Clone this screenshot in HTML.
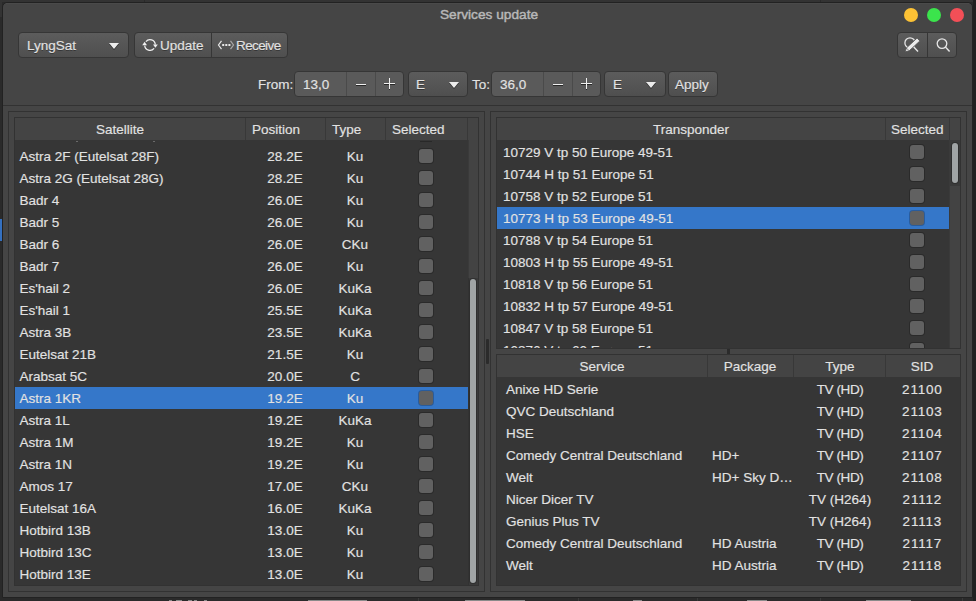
<!DOCTYPE html><html><head><meta charset="utf-8"><style>
html,body{margin:0;padding:0;}
body{width:976px;height:601px;position:relative;overflow:hidden;background:#2a2a2a;font-family:"Liberation Sans",sans-serif;font-size:13.5px;color:#e2e2e2;}
.t{position:absolute;white-space:nowrap;-webkit-text-stroke:0.15px #e2e2e2;}
.chk{position:absolute;box-sizing:border-box;width:14px;height:14px;margin:1px 0 0 1px;border-radius:3px;background:#616161;box-shadow:0 0 0 1px rgba(0,0,0,0.22);}
.btn{position:absolute;box-sizing:border-box;border:1px solid #363636;border-radius:4px;background:linear-gradient(#5c5c5c,#4f4f4f);}

</style></head><body>
<div style="position:absolute;left:0px;top:0px;width:976px;height:2px;background:#333333;"></div>
<div style="position:absolute;left:144px;top:0px;width:1px;height:2px;background:#2a2a2a;"></div>
<div style="position:absolute;left:820px;top:0px;width:1px;height:2px;background:#2a2a2a;"></div>
<div style="position:absolute;left:0px;top:219px;width:2px;height:22px;background:#3470c0;"></div>
<div style="position:absolute;left:973px;top:0px;width:3px;height:601px;background:#202020;"></div>
<div style="position:absolute;left:0px;top:0px;width:2px;height:17px;background:#333333;"></div>
<div style="position:absolute;left:169px;top:600px;width:3px;height:1px;background:#8a8a8a;"></div>
<div style="position:absolute;left:176px;top:600px;width:6px;height:1px;background:#8a8a8a;"></div>
<div style="position:absolute;left:188px;top:600px;width:4px;height:1px;background:#8a8a8a;"></div>
<div style="position:absolute;left:194px;top:600px;width:3px;height:1px;background:#8a8a8a;"></div>
<div style="position:absolute;left:204px;top:600px;width:3px;height:1px;background:#8a8a8a;"></div>
<div style="position:absolute;left:308px;top:600px;width:59px;height:1px;background:#8a8a8a;"></div>
<div style="position:absolute;left:465px;top:600px;width:60px;height:1px;background:#8a8a8a;"></div>
<div style="position:absolute;left:633px;top:600px;width:9px;height:1px;background:#8a8a8a;"></div>
<div style="position:absolute;left:747px;top:600px;width:20px;height:1px;background:#8a8a8a;"></div>
<div style="position:absolute;left:866px;top:600px;width:45px;height:1px;background:#8a8a8a;"></div>
<div style="position:absolute;left:418px;top:598px;width:1px;height:3px;background:#3a3a3a;"></div>
<div style="position:absolute;left:578px;top:598px;width:1px;height:3px;background:#3a3a3a;"></div>
<div style="position:absolute;left:697px;top:598px;width:1px;height:3px;background:#3a3a3a;"></div>
<div style="position:absolute;left:820px;top:598px;width:1px;height:3px;background:#3a3a3a;"></div>
<div style="position:absolute;left:962px;top:598px;width:1px;height:3px;background:#3a3a3a;"></div>
<div style="position:absolute;left:2px;top:2px;width:971px;height:596px;box-sizing:border-box;border:1px solid #222222;border-radius:5px 5px 0 0;background:#454545;"></div>
<div style="position:absolute;left:6px;top:3px;width:963px;height:1px;background:#4a4a4a;"></div>
<div class="t" style="left:339px;width:300px;text-align:center;top:3px;line-height:24px;color:#b8b8b8;font-size:13.7px;-webkit-text-stroke:0.45px #b8b8b8;">Services update</div>
<div style="position:absolute;left:904px;top:8px;width:14px;height:14px;border-radius:50%;background:#fcc235;"></div>
<div style="position:absolute;left:927px;top:8px;width:14px;height:14px;border-radius:50%;background:#3be44c;"></div>
<div style="position:absolute;left:950px;top:8px;width:14px;height:14px;border-radius:50%;background:#f34f57;"></div>
<div class="btn" style="left:18px;top:32px;width:111px;height:26px;"></div>
<div class="t" style="left:27px;top:33px;line-height:26px;text-shadow:0 1px 0 rgba(0,0,0,0.35);">LyngSat</div>
<div style="position:absolute;left:109px;top:43px;width:0;height:0;border-left:5px solid transparent;border-right:5px solid transparent;border-top:6px solid #ececec;filter:drop-shadow(0 1px 0 rgba(0,0,0,0.5));"></div>
<div class="btn" style="left:134px;top:32px;width:154px;height:26px;"></div>
<div style="position:absolute;left:211px;top:33px;width:1px;height:24px;background:#363636;"></div>
<svg style="position:absolute;left:141px;top:37px" width="18" height="16" viewBox="0 0 18 16">
<path d="M4.9 4.6 A5.3 5.3 0 0 1 14.3 7.6" fill="none" stroke="#f0f0f0" stroke-width="1.25"/>
<path d="M13.1 11.4 A5.3 5.3 0 0 1 3.7 8.6" fill="none" stroke="#f0f0f0" stroke-width="1.25"/>
<path d="M1.2 8.2 L3.6 4.8 L6.0 8.2 Z" fill="#f0f0f0"/>
<path d="M12.0 7.4 L16.8 7.4 L14.4 10.8 Z" fill="#f0f0f0"/>
</svg>
<div class="t" style="left:160px;top:33px;line-height:26px;text-shadow:0 1px 0 rgba(0,0,0,0.35);">Update</div>
<svg style="position:absolute;left:216px;top:38px" width="20" height="14" viewBox="0 0 20 14">
<path d="M5.5 2.8 L2.5 7 L5.5 11.2" fill="none" stroke="#e8e8e8" stroke-width="1.2"/>
<rect x="6.2" y="6" width="2" height="2" fill="#e8e8e8"/>
<rect x="9.3" y="6" width="2" height="2" fill="#e8e8e8"/>
<rect x="12.4" y="6" width="2" height="2" fill="#e8e8e8"/>
<path d="M14.5 2.8 L17.5 7 L14.5 11.2" fill="none" stroke="#a8a8a8" stroke-width="1.2"/>
</svg>
<div class="t" style="left:236px;top:33px;line-height:26px;letter-spacing:-0.6px;text-shadow:0 1px 0 rgba(0,0,0,0.35);">Receive</div>
<div class="btn" style="left:897px;top:32px;width:60px;height:26px;"></div>
<div style="position:absolute;left:927px;top:33px;width:1px;height:24px;background:#363636;"></div>
<svg style="position:absolute;left:902px;top:36px" width="20" height="18" viewBox="0 0 20 18">
<circle cx="8" cy="6.9" r="5.1" fill="none" stroke="#e8e8e8" stroke-width="1.25"/>
<path d="M11.3 10.6 L16 15.4" stroke="#e8e8e8" stroke-width="1.4"/>
<path d="M3.2 15.8 L4.44 11.93 L15.14 2.03 L17.86 4.97 L7.16 14.87 Z" fill="#ececec" stroke="#575757" stroke-width="0.9" stroke-linejoin="round"/>
<path d="M4.6 12.2 L6.9 14.6" stroke="#575757" stroke-width="0.7"/>
</svg>
<svg style="position:absolute;left:932.5px;top:36px" width="20" height="18" viewBox="0 0 20 18">
<circle cx="9" cy="7.6" r="4.8" fill="none" stroke="#e6e6e6" stroke-width="1.3"/>
<path d="M12.4 11 L16.6 15.4" stroke="#e6e6e6" stroke-width="1.4"/>
</svg>
<div class="t" style="left:258px;top:72px;line-height:26px;">From:</div>
<div style="position:absolute;box-sizing:border-box;left:294px;top:71px;width:110px;height:26px;border:1px solid #363636;border-radius:4px;background:#5a5a5a;"></div>
<div style="position:absolute;left:346px;top:72px;width:1px;height:24px;background:#4a4a4a;"></div>
<div style="position:absolute;left:375px;top:72px;width:1px;height:24px;background:#4a4a4a;"></div>
<div class="t" style="left:303px;top:72px;line-height:26px;">13,0</div>
<div style="position:absolute;left:356px;top:84px;width:10px;height:1px;background:#f0f0f0;"></div>
<div style="position:absolute;left:356px;top:85px;width:10px;height:1px;background:#1a1a1a;opacity:0.8;"></div>
<div style="position:absolute;left:384px;top:83px;width:11px;height:1px;background:#f0f0f0;"></div>
<div style="position:absolute;left:384px;top:84px;width:5px;height:1px;background:#1a1a1a;opacity:0.8;"></div>
<div style="position:absolute;left:390px;top:84px;width:5px;height:1px;background:#1a1a1a;opacity:0.8;"></div>
<div style="position:absolute;left:389px;top:78px;width:1px;height:11px;background:#f0f0f0;"></div>
<div style="position:absolute;left:389px;top:89px;width:1px;height:1px;background:#1a1a1a;opacity:0.8;"></div>
<div class="btn" style="left:408px;top:71px;width:60px;height:26px;"></div>
<div class="t" style="left:416px;top:72px;line-height:26px;text-shadow:0 1px 0 rgba(0,0,0,0.35);">E</div>
<div style="position:absolute;left:449px;top:82px;width:0;height:0;border-left:5px solid transparent;border-right:5px solid transparent;border-top:6px solid #ececec;filter:drop-shadow(0 1px 0 rgba(0,0,0,0.5));"></div>
<div class="t" style="left:472px;top:72px;line-height:26px;">To:</div>
<div style="position:absolute;box-sizing:border-box;left:491px;top:71px;width:110px;height:26px;border:1px solid #363636;border-radius:4px;background:#5a5a5a;"></div>
<div style="position:absolute;left:543px;top:72px;width:1px;height:24px;background:#4a4a4a;"></div>
<div style="position:absolute;left:572px;top:72px;width:1px;height:24px;background:#4a4a4a;"></div>
<div class="t" style="left:500px;top:72px;line-height:26px;">36,0</div>
<div style="position:absolute;left:553px;top:84px;width:10px;height:1px;background:#f0f0f0;"></div>
<div style="position:absolute;left:553px;top:85px;width:10px;height:1px;background:#1a1a1a;opacity:0.8;"></div>
<div style="position:absolute;left:581px;top:83px;width:11px;height:1px;background:#f0f0f0;"></div>
<div style="position:absolute;left:581px;top:84px;width:5px;height:1px;background:#1a1a1a;opacity:0.8;"></div>
<div style="position:absolute;left:587px;top:84px;width:5px;height:1px;background:#1a1a1a;opacity:0.8;"></div>
<div style="position:absolute;left:586px;top:78px;width:1px;height:11px;background:#f0f0f0;"></div>
<div style="position:absolute;left:586px;top:89px;width:1px;height:1px;background:#1a1a1a;opacity:0.8;"></div>
<div class="btn" style="left:604px;top:71px;width:62px;height:26px;"></div>
<div class="t" style="left:613px;top:72px;line-height:26px;text-shadow:0 1px 0 rgba(0,0,0,0.35);">E</div>
<div style="position:absolute;left:646px;top:82px;width:0;height:0;border-left:5px solid transparent;border-right:5px solid transparent;border-top:6px solid #ececec;filter:drop-shadow(0 1px 0 rgba(0,0,0,0.5));"></div>
<div class="btn" style="left:668px;top:71px;width:50px;height:26px;"></div>
<div class="t" style="left:675px;top:72px;line-height:26px;text-shadow:0 1px 0 rgba(0,0,0,0.35);">Apply</div>
<div style="position:absolute;left:3px;top:105px;width:969px;height:1px;background:#323232;"></div>
<div style="position:absolute;box-sizing:border-box;left:8px;top:111px;width:477px;height:481px;border:1px solid #323232;"></div>
<div style="position:absolute;box-sizing:border-box;left:14px;top:117px;width:465px;height:469px;border:1px solid #323232;"></div>
<div style="position:absolute;left:15px;top:118px;width:463px;height:22px;background:#444444;"></div>
<div style="position:absolute;left:245px;top:118px;width:1px;height:22px;background:#383838;"></div>
<div style="position:absolute;left:325px;top:118px;width:1px;height:22px;background:#383838;"></div>
<div style="position:absolute;left:385px;top:118px;width:1px;height:22px;background:#383838;"></div>
<div style="position:absolute;left:467px;top:118px;width:1px;height:22px;background:#383838;"></div>
<div style="position:absolute;left:15px;top:140px;width:453px;height:445px;background:#363636;"></div>
<div style="position:absolute;left:468px;top:140px;width:10px;height:445px;background:#434343;"></div>
<div style="position:absolute;left:468px;top:140px;width:1px;height:445px;background:#3a3a3a;"></div>
<div style="position:absolute;left:468px;top:278px;width:10px;height:307px;background:rgba(0,0,0,0.12);"></div>
<div style="position:absolute;left:470px;top:279px;width:6px;height:304px;background:#a0a4a5;border-radius:3px;box-shadow:0 0 0 1px rgba(0,0,0,0.2);"></div>
<div class="t" style="left:96px;top:119px;line-height:22px;">Satellite</div>
<div class="t" style="left:252px;top:119px;line-height:22px;">Position</div>
<div class="t" style="left:332px;top:119px;line-height:22px;">Type</div>
<div class="t" style="left:392px;top:119px;line-height:22px;">Selected</div>
<div style="position:absolute;left:15px;top:140px;width:453px;height:445px;overflow:hidden;">
<div class="t" style="left:4.5px;top:6px;line-height:22px;">Astra 2F (Eutelsat 28F)</div>
<div class="t" style="left:120px;width:300px;text-align:center;top:6px;line-height:22px;">28.2E</div>
<div class="t" style="left:190px;width:300px;text-align:center;top:6px;line-height:22px;">Ku</div>
<div class="chk" style="left:403px;top:8px;"></div>
<div class="t" style="left:4.5px;top:28px;line-height:22px;">Astra 2G (Eutelsat 28G)</div>
<div class="t" style="left:120px;width:300px;text-align:center;top:28px;line-height:22px;">28.2E</div>
<div class="t" style="left:190px;width:300px;text-align:center;top:28px;line-height:22px;">Ku</div>
<div class="chk" style="left:403px;top:30px;"></div>
<div class="t" style="left:4.5px;top:50px;line-height:22px;">Badr 4</div>
<div class="t" style="left:120px;width:300px;text-align:center;top:50px;line-height:22px;">26.0E</div>
<div class="t" style="left:190px;width:300px;text-align:center;top:50px;line-height:22px;">Ku</div>
<div class="chk" style="left:403px;top:52px;"></div>
<div class="t" style="left:4.5px;top:72px;line-height:22px;">Badr 5</div>
<div class="t" style="left:120px;width:300px;text-align:center;top:72px;line-height:22px;">26.0E</div>
<div class="t" style="left:190px;width:300px;text-align:center;top:72px;line-height:22px;">Ku</div>
<div class="chk" style="left:403px;top:74px;"></div>
<div class="t" style="left:4.5px;top:94px;line-height:22px;">Badr 6</div>
<div class="t" style="left:120px;width:300px;text-align:center;top:94px;line-height:22px;">26.0E</div>
<div class="t" style="left:190px;width:300px;text-align:center;top:94px;line-height:22px;">CKu</div>
<div class="chk" style="left:403px;top:96px;"></div>
<div class="t" style="left:4.5px;top:116px;line-height:22px;">Badr 7</div>
<div class="t" style="left:120px;width:300px;text-align:center;top:116px;line-height:22px;">26.0E</div>
<div class="t" style="left:190px;width:300px;text-align:center;top:116px;line-height:22px;">Ku</div>
<div class="chk" style="left:403px;top:118px;"></div>
<div class="t" style="left:4.5px;top:138px;line-height:22px;">Es'hail 2</div>
<div class="t" style="left:120px;width:300px;text-align:center;top:138px;line-height:22px;">26.0E</div>
<div class="t" style="left:190px;width:300px;text-align:center;top:138px;line-height:22px;">KuKa</div>
<div class="chk" style="left:403px;top:140px;"></div>
<div class="t" style="left:4.5px;top:160px;line-height:22px;">Es'hail 1</div>
<div class="t" style="left:120px;width:300px;text-align:center;top:160px;line-height:22px;">25.5E</div>
<div class="t" style="left:190px;width:300px;text-align:center;top:160px;line-height:22px;">KuKa</div>
<div class="chk" style="left:403px;top:162px;"></div>
<div class="t" style="left:4.5px;top:182px;line-height:22px;">Astra 3B</div>
<div class="t" style="left:120px;width:300px;text-align:center;top:182px;line-height:22px;">23.5E</div>
<div class="t" style="left:190px;width:300px;text-align:center;top:182px;line-height:22px;">KuKa</div>
<div class="chk" style="left:403px;top:184px;"></div>
<div class="t" style="left:4.5px;top:204px;line-height:22px;">Eutelsat 21B</div>
<div class="t" style="left:120px;width:300px;text-align:center;top:204px;line-height:22px;">21.5E</div>
<div class="t" style="left:190px;width:300px;text-align:center;top:204px;line-height:22px;">Ku</div>
<div class="chk" style="left:403px;top:206px;"></div>
<div class="t" style="left:4.5px;top:226px;line-height:22px;">Arabsat 5C</div>
<div class="t" style="left:120px;width:300px;text-align:center;top:226px;line-height:22px;">20.0E</div>
<div class="t" style="left:190px;width:300px;text-align:center;top:226px;line-height:22px;">C</div>
<div class="chk" style="left:403px;top:228px;"></div>
<div style="position:absolute;left:0px;top:247px;width:453px;height:22px;background:#3577c9;"></div>
<div class="t" style="left:4.5px;top:248px;line-height:22px;">Astra 1KR</div>
<div class="t" style="left:120px;width:300px;text-align:center;top:248px;line-height:22px;">19.2E</div>
<div class="t" style="left:190px;width:300px;text-align:center;top:248px;line-height:22px;">Ku</div>
<div class="chk" style="left:403px;top:250px;"></div>
<div class="t" style="left:4.5px;top:270px;line-height:22px;">Astra 1L</div>
<div class="t" style="left:120px;width:300px;text-align:center;top:270px;line-height:22px;">19.2E</div>
<div class="t" style="left:190px;width:300px;text-align:center;top:270px;line-height:22px;">KuKa</div>
<div class="chk" style="left:403px;top:272px;"></div>
<div class="t" style="left:4.5px;top:292px;line-height:22px;">Astra 1M</div>
<div class="t" style="left:120px;width:300px;text-align:center;top:292px;line-height:22px;">19.2E</div>
<div class="t" style="left:190px;width:300px;text-align:center;top:292px;line-height:22px;">Ku</div>
<div class="chk" style="left:403px;top:294px;"></div>
<div class="t" style="left:4.5px;top:314px;line-height:22px;">Astra 1N</div>
<div class="t" style="left:120px;width:300px;text-align:center;top:314px;line-height:22px;">19.2E</div>
<div class="t" style="left:190px;width:300px;text-align:center;top:314px;line-height:22px;">Ku</div>
<div class="chk" style="left:403px;top:316px;"></div>
<div class="t" style="left:4.5px;top:336px;line-height:22px;">Amos 17</div>
<div class="t" style="left:120px;width:300px;text-align:center;top:336px;line-height:22px;">17.0E</div>
<div class="t" style="left:190px;width:300px;text-align:center;top:336px;line-height:22px;">CKu</div>
<div class="chk" style="left:403px;top:338px;"></div>
<div class="t" style="left:4.5px;top:358px;line-height:22px;">Eutelsat 16A</div>
<div class="t" style="left:120px;width:300px;text-align:center;top:358px;line-height:22px;">16.0E</div>
<div class="t" style="left:190px;width:300px;text-align:center;top:358px;line-height:22px;">KuKa</div>
<div class="chk" style="left:403px;top:360px;"></div>
<div class="t" style="left:4.5px;top:380px;line-height:22px;">Hotbird 13B</div>
<div class="t" style="left:120px;width:300px;text-align:center;top:380px;line-height:22px;">13.0E</div>
<div class="t" style="left:190px;width:300px;text-align:center;top:380px;line-height:22px;">Ku</div>
<div class="chk" style="left:403px;top:382px;"></div>
<div class="t" style="left:4.5px;top:402px;line-height:22px;">Hotbird 13C</div>
<div class="t" style="left:120px;width:300px;text-align:center;top:402px;line-height:22px;">13.0E</div>
<div class="t" style="left:190px;width:300px;text-align:center;top:402px;line-height:22px;">Ku</div>
<div class="chk" style="left:403px;top:404px;"></div>
<div class="t" style="left:4.5px;top:424px;line-height:22px;">Hotbird 13E</div>
<div class="t" style="left:120px;width:300px;text-align:center;top:424px;line-height:22px;">13.0E</div>
<div class="t" style="left:190px;width:300px;text-align:center;top:424px;line-height:22px;">Ku</div>
<div class="chk" style="left:403px;top:426px;"></div>
<div style="position:absolute;left:61px;top:1px;width:2px;height:1px;background:#6a6a6a;"></div>
<div style="position:absolute;left:138px;top:1px;width:2px;height:1px;background:#6a6a6a;"></div>
<div style="position:absolute;left:405px;top:1px;width:12px;height:1px;background:rgba(0,0,0,0.25);"></div>
</div>
<div style="position:absolute;left:486px;top:339px;width:3px;height:25px;background:#2b2b2b;border-radius:1px;"></div>
<div style="position:absolute;box-sizing:border-box;left:490px;top:111px;width:477px;height:481px;border:1px solid #323232;"></div>
<div style="position:absolute;box-sizing:border-box;left:496px;top:117px;width:465px;height:232px;border:1px solid #323232;"></div>
<div style="position:absolute;left:497px;top:118px;width:463px;height:22px;background:#444444;"></div>
<div style="position:absolute;left:885px;top:118px;width:1px;height:22px;background:#383838;"></div>
<div style="position:absolute;left:949px;top:118px;width:1px;height:22px;background:#383838;"></div>
<div style="position:absolute;left:497px;top:140px;width:452px;height:208px;background:#363636;"></div>
<div style="position:absolute;left:949px;top:140px;width:11px;height:208px;background:#434343;"></div>
<div style="position:absolute;left:949px;top:140px;width:1px;height:208px;background:#3a3a3a;"></div>
<div style="position:absolute;left:950px;top:140px;width:10px;height:46px;background:rgba(0,0,0,0.12);"></div>
<div style="position:absolute;left:952px;top:143px;width:6px;height:40px;background:#a0a4a5;border-radius:3px;box-shadow:0 0 0 1px rgba(0,0,0,0.2);"></div>
<div class="t" style="left:653px;top:119px;line-height:22px;">Transponder</div>
<div class="t" style="left:891px;top:119px;line-height:22px;">Selected</div>
<div style="position:absolute;left:497px;top:140px;width:452px;height:208px;overflow:hidden;">
<div class="t" style="left:6px;top:2px;line-height:22px;">10729 V tp 50 Europe 49-51</div>
<div class="chk" style="left:412px;top:4px;"></div>
<div class="t" style="left:6px;top:24px;line-height:22px;">10744 H tp 51 Europe 51</div>
<div class="chk" style="left:412px;top:26px;"></div>
<div class="t" style="left:6px;top:46px;line-height:22px;">10758 V tp 52 Europe 51</div>
<div class="chk" style="left:412px;top:48px;"></div>
<div style="position:absolute;left:0px;top:67px;width:452px;height:22px;background:#3577c9;"></div>
<div class="t" style="left:6px;top:68px;line-height:22px;">10773 H tp 53 Europe 49-51</div>
<div class="chk" style="left:412px;top:70px;"></div>
<div class="t" style="left:6px;top:90px;line-height:22px;">10788 V tp 54 Europe 51</div>
<div class="chk" style="left:412px;top:92px;"></div>
<div class="t" style="left:6px;top:112px;line-height:22px;">10803 H tp 55 Europe 49-51</div>
<div class="chk" style="left:412px;top:114px;"></div>
<div class="t" style="left:6px;top:134px;line-height:22px;">10818 V tp 56 Europe 51</div>
<div class="chk" style="left:412px;top:136px;"></div>
<div class="t" style="left:6px;top:156px;line-height:22px;">10832 H tp 57 Europe 49-51</div>
<div class="chk" style="left:412px;top:158px;"></div>
<div class="t" style="left:6px;top:178px;line-height:22px;">10847 V tp 58 Europe 51</div>
<div class="chk" style="left:412px;top:180px;"></div>
<div class="t" style="left:6px;top:200px;line-height:22px;">10876 V tp 60 Europe 51</div>
<div class="chk" style="left:412px;top:202px;"></div>
</div>
<div style="position:absolute;left:727px;top:349px;width:3px;height:5px;background:#2b2b2b;"></div>
<div style="position:absolute;box-sizing:border-box;left:496px;top:354px;width:465px;height:232px;border:1px solid #323232;"></div>
<div style="position:absolute;left:497px;top:355px;width:463px;height:22px;background:#444444;"></div>
<div style="position:absolute;left:707px;top:355px;width:1px;height:22px;background:#383838;"></div>
<div style="position:absolute;left:793px;top:355px;width:1px;height:22px;background:#383838;"></div>
<div style="position:absolute;left:885px;top:355px;width:1px;height:22px;background:#383838;"></div>
<div style="position:absolute;left:497px;top:377px;width:463px;height:208px;background:#363636;"></div>
<div class="t" style="left:452px;width:300px;text-align:center;top:356px;line-height:22px;">Service</div>
<div class="t" style="left:600px;width:300px;text-align:center;top:356px;line-height:22px;">Package</div>
<div class="t" style="left:690px;width:300px;text-align:center;top:356px;line-height:22px;">Type</div>
<div class="t" style="left:772px;width:300px;text-align:center;top:356px;line-height:22px;">SID</div>
<div class="t" style="left:506px;top:379px;line-height:22px;">Anixe HD Serie</div>
<div class="t" style="left:690px;width:300px;text-align:center;top:379px;line-height:22px;letter-spacing:-0.4px;">TV (HD)</div>
<div class="t" style="left:772.4px;width:300px;text-align:center;top:379px;line-height:22px;letter-spacing:0.8px;">21100</div>
<div class="t" style="left:506px;top:401px;line-height:22px;">QVC Deutschland</div>
<div class="t" style="left:690px;width:300px;text-align:center;top:401px;line-height:22px;letter-spacing:-0.4px;">TV (HD)</div>
<div class="t" style="left:772.4px;width:300px;text-align:center;top:401px;line-height:22px;letter-spacing:0.8px;">21103</div>
<div class="t" style="left:506px;top:423px;line-height:22px;">HSE</div>
<div class="t" style="left:690px;width:300px;text-align:center;top:423px;line-height:22px;letter-spacing:-0.4px;">TV (HD)</div>
<div class="t" style="left:772.4px;width:300px;text-align:center;top:423px;line-height:22px;letter-spacing:0.8px;">21104</div>
<div class="t" style="left:506px;top:445px;line-height:22px;">Comedy Central Deutschland</div>
<div class="t" style="left:712px;top:445px;line-height:22px;">HD+</div>
<div class="t" style="left:690px;width:300px;text-align:center;top:445px;line-height:22px;letter-spacing:-0.4px;">TV (HD)</div>
<div class="t" style="left:772.4px;width:300px;text-align:center;top:445px;line-height:22px;letter-spacing:0.8px;">21107</div>
<div class="t" style="left:506px;top:467px;line-height:22px;">Welt</div>
<div class="t" style="left:712px;top:467px;line-height:22px;">HD+ Sky D…</div>
<div class="t" style="left:690px;width:300px;text-align:center;top:467px;line-height:22px;letter-spacing:-0.4px;">TV (HD)</div>
<div class="t" style="left:772.4px;width:300px;text-align:center;top:467px;line-height:22px;letter-spacing:0.8px;">21108</div>
<div class="t" style="left:506px;top:489px;line-height:22px;">Nicer Dicer TV</div>
<div class="t" style="left:690px;width:300px;text-align:center;top:489px;line-height:22px;">TV (H264)</div>
<div class="t" style="left:772.4px;width:300px;text-align:center;top:489px;line-height:22px;letter-spacing:0.8px;">21112</div>
<div class="t" style="left:506px;top:511px;line-height:22px;">Genius Plus TV</div>
<div class="t" style="left:690px;width:300px;text-align:center;top:511px;line-height:22px;">TV (H264)</div>
<div class="t" style="left:772.4px;width:300px;text-align:center;top:511px;line-height:22px;letter-spacing:0.8px;">21113</div>
<div class="t" style="left:506px;top:533px;line-height:22px;">Comedy Central Deutschland</div>
<div class="t" style="left:712px;top:533px;line-height:22px;">HD Austria</div>
<div class="t" style="left:690px;width:300px;text-align:center;top:533px;line-height:22px;letter-spacing:-0.4px;">TV (HD)</div>
<div class="t" style="left:772.4px;width:300px;text-align:center;top:533px;line-height:22px;letter-spacing:0.8px;">21117</div>
<div class="t" style="left:506px;top:555px;line-height:22px;">Welt</div>
<div class="t" style="left:712px;top:555px;line-height:22px;">HD Austria</div>
<div class="t" style="left:690px;width:300px;text-align:center;top:555px;line-height:22px;letter-spacing:-0.4px;">TV (HD)</div>
<div class="t" style="left:772.4px;width:300px;text-align:center;top:555px;line-height:22px;letter-spacing:0.8px;">21118</div>
</body></html>
